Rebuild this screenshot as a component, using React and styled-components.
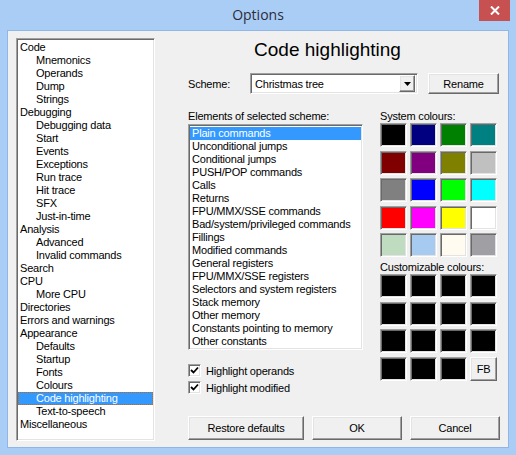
import React from "react";
import styled, { createGlobalStyle } from "styled-components";

const GlobalStyle = createGlobalStyle`
  body {
    margin: 0;
    font-family: "Liberation Sans", Arial, sans-serif;
    font-size: 11px;
    letter-spacing: -0.2px;
    color: #000;
  }
`;

const sunken = `
  box-sizing: border-box;
  border: 1px solid;
  border-color: #a0a0a0 #ffffff #ffffff #a0a0a0;
  box-shadow: inset 1px 1px 0 #696969, inset -1px -1px 0 #e3e3e3;
`;

const raised = `
  box-sizing: border-box;
  border: 1px solid;
  border-color: #ffffff #696969 #696969 #ffffff;
  box-shadow: inset -1px -1px 0 #a0a0a0, inset 1px 1px 0 #e3e3e3;
  background: #f0f0f0;
`;

const Window = styled.div`
  width: 516px;
  height: 455px;
  background: #aacdf5;
  display: flex;
  flex-direction: column;
`;

const TitleBar = styled.div`
  height: 30px;
  display: grid;
  grid-template-columns: 1fr auto 1fr;
  align-items: start;
`;

const Title = styled.div`
  grid-column: 2;
  line-height: 30px;
  font-family: "Open Sans", "Noto Sans", sans-serif;
  font-size: 14px;
  letter-spacing: 0;
  color: #2b2b3a;
`;

const CloseButton = styled.div`
  justify-self: end;
  margin-right: 6px;
  width: 31px;
  height: 21px;
  background: #c75050;
  display: flex;
  align-items: center;
  justify-content: center;
`;

const Client = styled.div`
  margin: 0 7px 7px;
  flex: 1;
  border: 1px solid #8fb6e6;
  background: #f0f0f0;
  display: flex;
  padding: 7px 8px 6px 8px;
`;

const Tree = styled.div`
  ${sunken}
  width: 139px;
  background: #fff;
  padding: 2px 1px 1px 1px;
`;

const TreeRow = styled.div`
  height: 13px;
  line-height: 13px;
  padding-left: ${(p) => (p.level ? 18 : 2)}px;
  white-space: nowrap;
  box-sizing: border-box;
  ${(p) =>
    p.selected &&
    `
    background: #3399ff;
    color: #fff;
    outline: 1px dotted #cc6600;
    outline-offset: -1px;
  `}
`;

const Main = styled.div`
  flex: 1;
  margin-left: 33px;
  display: flex;
  flex-direction: column;
  padding-bottom: 1px;
`;

const Heading = styled.div`
  margin-left: -33px;
  text-align: center;
  font-size: 19px;
  line-height: 24px;
  letter-spacing: 0;
`;

const SchemeRow = styled.div`
  margin-top: 11px;
  display: flex;
  align-items: center;
  height: 21px;
`;

const SchemeLabel = styled.div`
  width: 62px;
`;

const Combo = styled.div`
  ${sunken}
  width: 168px;
  height: 21px;
  background: #fff;
  display: flex;
  align-items: center;
  padding: 2px 2px 2px 4px;
`;

const ComboText = styled.div`
  flex: 1;
`;

const DropButton = styled.div`
  ${raised}
  width: 16px;
  height: 17px;
  display: flex;
  align-items: center;
  justify-content: center;
`;

const Button = styled.div`
  ${raised}
  width: ${(p) => p.w}px;
  height: ${(p) => p.h || 24}px;
  margin-left: ${(p) => p.ml || 0}px;
  display: flex;
  align-items: center;
  justify-content: center;
`;

const Body = styled.div`
  margin-top: 16px;
  display: flex;
`;

const LeftCol = styled.div`
  width: 175px;
  display: flex;
  flex-direction: column;
`;

const RightCol = styled.div`
  width: 117px;
  margin-left: 17px;
  display: flex;
  flex-direction: column;
`;

const Label = styled.div`
  height: 13px;
  line-height: 13px;
  margin-top: ${(p) => p.mt || 0}px;
`;

const List = styled.div`
  ${sunken}
  margin-top: 1px;
  height: 226px;
  background: #fff;
  padding: 2px 1px 1px 1px;
`;

const ListRow = styled.div`
  height: 13px;
  line-height: 13px;
  padding-left: 2px;
  white-space: nowrap;
  ${(p) => p.selected && `background: #3399ff; color: #fff;`}
`;

const CheckRow = styled.div`
  margin-top: ${(p) => p.mt}px;
  display: flex;
  align-items: center;
  gap: 5px;
  height: 13px;
`;

const CheckBox = styled.div`
  ${sunken}
  width: 13px;
  height: 13px;
  background: #fff;
  display: flex;
  align-items: center;
  justify-content: center;
`;

const Swatches = styled.div`
  display: grid;
  grid-template-columns: repeat(4, 27px);
  grid-auto-rows: 24px;
  column-gap: 3px;
  row-gap: 3.5px;
`;

const Swatch = styled.div`
  ${sunken}
  background: ${(p) => p.color};
`;

const FBButton = styled.div`
  ${raised}
  display: flex;
  align-items: center;
  justify-content: center;
`;

const ButtonRow = styled.div`
  margin-top: auto;
  display: flex;
  gap: 8px;
`;

const treeItems = [
  ["Code", 0],
  ["Mnemonics", 1],
  ["Operands", 1],
  ["Dump", 1],
  ["Strings", 1],
  ["Debugging", 0],
  ["Debugging data", 1],
  ["Start", 1],
  ["Events", 1],
  ["Exceptions", 1],
  ["Run trace", 1],
  ["Hit trace", 1],
  ["SFX", 1],
  ["Just-in-time", 1],
  ["Analysis", 0],
  ["Advanced", 1],
  ["Invalid commands", 1],
  ["Search", 0],
  ["CPU", 0],
  ["More CPU", 1],
  ["Directories", 0],
  ["Errors and warnings", 0],
  ["Appearance", 0],
  ["Defaults", 1],
  ["Startup", 1],
  ["Fonts", 1],
  ["Colours", 1],
  ["Code highlighting", 1],
  ["Text-to-speech", 1],
  ["Miscellaneous", 0],
];

const elements = [
  "Plain commands",
  "Unconditional jumps",
  "Conditional jumps",
  "PUSH/POP commands",
  "Calls",
  "Returns",
  "FPU/MMX/SSE commands",
  "Bad/system/privileged commands",
  "Fillings",
  "Modified commands",
  "General registers",
  "FPU/MMX/SSE registers",
  "Selectors and system registers",
  "Stack memory",
  "Other memory",
  "Constants pointing to memory",
  "Other constants",
];

const systemColours = [
  "#000000", "#000080", "#008000", "#008080",
  "#800000", "#800080", "#808000", "#c0c0c0",
  "#808080", "#0000ff", "#00ff00", "#00ffff",
  "#ff0000", "#ff00ff", "#ffff00", "#ffffff",
  "#c0dcc0", "#a6caf0", "#fffbf0", "#a0a0a4",
];

const Check = () => (
  <svg width="9" height="9" viewBox="0 0 9 9">
    <polyline points="1,4 3.5,6.5 8,1.5" fill="none" stroke="#000" strokeWidth="1.8" />
  </svg>
);

export default function App() {
  return (
    <>
      <GlobalStyle />
      <Window>
        <TitleBar>
          <Title>Options</Title>
          <CloseButton>
            <svg width="10" height="9" viewBox="0 0 10 9">
              <path d="M1 0.5 L9 8.5 M9 0.5 L1 8.5" stroke="#fff" strokeWidth="2" />
            </svg>
          </CloseButton>
        </TitleBar>
        <Client>
          <Tree>
            {treeItems.map(([name, level]) => (
              <TreeRow key={name} level={level} selected={name === "Code highlighting"}>
                {name}
              </TreeRow>
            ))}
          </Tree>
          <Main>
            <Heading>Code highlighting</Heading>
            <SchemeRow>
              <SchemeLabel>Scheme:</SchemeLabel>
              <Combo>
                <ComboText>Christmas tree</ComboText>
                <DropButton>
                  <svg width="7" height="4" viewBox="0 0 7 4">
                    <path d="M0 0 H7 L3.5 4 Z" fill="#000" />
                  </svg>
                </DropButton>
              </Combo>
              <Button w={71} h={21} ml={10}>Rename</Button>
            </SchemeRow>
            <Body>
              <LeftCol>
                <Label>Elements of selected scheme:</Label>
                <List>
                  {elements.map((e, i) => (
                    <ListRow key={e} selected={i === 0}>{e}</ListRow>
                  ))}
                </List>
                <CheckRow mt={14}>
                  <CheckBox><Check /></CheckBox>
                  Highlight operands
                </CheckRow>
                <CheckRow mt={4}>
                  <CheckBox><Check /></CheckBox>
                  Highlight modified
                </CheckRow>
              </LeftCol>
              <RightCol>
                <Label>System colours:</Label>
                <Swatches>
                  {systemColours.map((c, i) => (
                    <Swatch key={i} color={c} />
                  ))}
                </Swatches>
                <Label mt={4}>Customizable colours:</Label>
                <Swatches>
                  {Array.from({ length: 15 }).map((_, i) => (
                    <Swatch key={i} color="#000" />
                  ))}
                  <FBButton>FB</FBButton>
                </Swatches>
              </RightCol>
            </Body>
            <ButtonRow>
              <Button w={116}>Restore defaults</Button>
              <Button w={90}>OK</Button>
              <Button w={90}>Cancel</Button>
            </ButtonRow>
          </Main>
        </Client>
      </Window>
    </>
  );
}
